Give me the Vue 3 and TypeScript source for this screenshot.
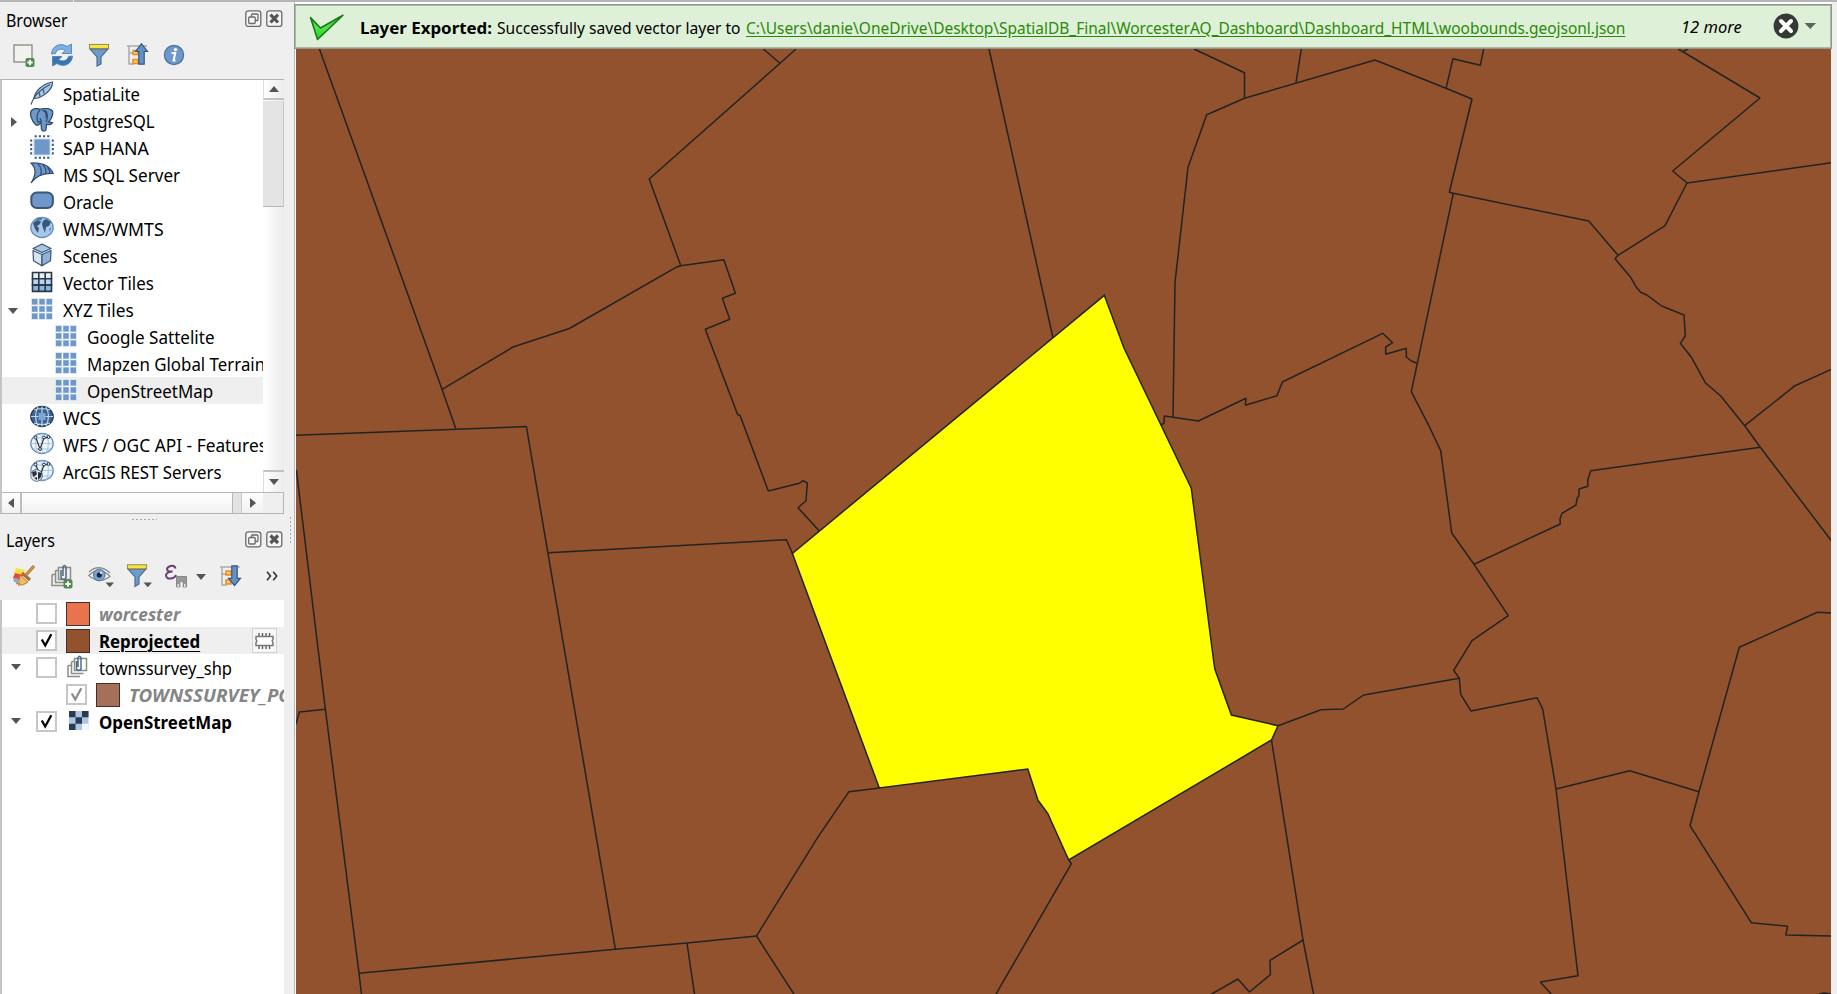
<script setup lang="ts">
import type { Directive } from 'vue'

interface BrowserItem {
  label: string
  icon: string
  width: number
  child?: boolean
  arrow?: 'right' | 'down'
  current?: boolean
}

interface LayerItem {
  label: string
  width: number
  checked: boolean
  kind: string
  color?: string
  child?: boolean
  arrow?: boolean
  current?: boolean
  memory?: boolean
}

const browserItems: BrowserItem[] = [
  { label: 'SpatiaLite', icon: 'feather', width: 77 },
  { label: 'PostgreSQL', icon: 'elephant', width: 92, arrow: 'right' },
  { label: 'SAP HANA', icon: 'hana', width: 86 },
  { label: 'MS SQL Server', icon: 'mssql', width: 117 },
  { label: 'Oracle', icon: 'oracle', width: 51 },
  { label: 'WMS/WMTS', icon: 'wms', width: 101 },
  { label: 'Scenes', icon: 'scenes', width: 55 },
  { label: 'Vector Tiles', icon: 'vtiles', width: 91 },
  { label: 'XYZ Tiles', icon: 'xyz', width: 71, arrow: 'down' },
  { label: 'Google Sattelite', icon: 'xyz', width: 128, child: true },
  { label: 'Mapzen Global Terrain', icon: 'xyz', width: 178, child: true },
  { label: 'OpenStreetMap', icon: 'xyz', width: 126, child: true, current: true },
  { label: 'WCS', icon: 'wcs', width: 38 },
  { label: 'WFS / OGC API - Features', icon: 'wfs', width: 204 },
  { label: 'ArcGIS REST Servers', icon: 'arcgis', width: 159 },
]

const layers: LayerItem[] = [
  { label: 'worcester', width: 81, checked: false, kind: 'off', color: '#e8734d' },
  { label: 'Reprojected', width: 101, checked: true, kind: 'active', color: '#91522d', current: true, memory: true },
  { label: 'townssurvey_shp', width: 133, checked: false, kind: 'group', arrow: true },
  { label: 'TOWNSSURVEY_POLYM', width: 199, checked: true, kind: 'off', color: '#a57059', child: true },
  { label: 'OpenStreetMap', width: 133, checked: true, kind: 'raster', arrow: true },
]

/* Condenses a label horizontally so that it takes the given advance width. */
const vFit: Directive<HTMLElement, number> = {
  mounted(el, binding) {
    el.style.transform = `scaleX(${binding.value / el.offsetWidth})`
  },
}

const selectedTown =
  '1104.3,295.3 1124,348 1191.3,488.3 1213.8,662 1214.9,669.3 1231.4,715 1278,725.7 1271.5,740 1068.7,860 1047.7,813.3 1038,800.3 1027.8,769 879.3,788 792.4,553.4'

const boundaries: string[] = [
  '319.4,49 442.1,389.4 455.7,428.6',
  '442.1,389.4 513,347 569.4,328.5 676,267.3 680.8,265.7 723.9,259.7 735.4,293.3 722.3,298.3 729.8,319.3 705.3,329.3 737.7,414.7 740,415.3 768.3,491 799.3,483.3 803,480.7 807.3,483 806,500.7 798,507.7 819.3,531',
  '763.4,49 780,63.3 796,49',
  '780,63.3 649.2,179 680.8,265.7',
  '989,49 1053,338',
  '1194,49 1244.5,72.7 1244.5,98.3',
  '1301.3,49 1296,82.7',
  '1173,417.3 1175,282.7 1188,167.3 1206.7,114.7 1244.5,98.3 1375,60 1446,88.3 1472,99 1449.3,192.3 1453.3,193.3 1588.7,221 1618,255.3 1615,258.7 1630.7,277.3 1636,286.7 1640.7,292.3 1646.3,294.7 1661.7,306 1684,315 1685.3,336 1680.3,343.3 1691,356.7 1705.3,382.7 1721,396.3 1744.7,425.7 1760.3,447.3 1832,541.5',
  '1161,424.3 1164,423.7 1164.3,416 1173,417.3 1198.3,421 1246,398.3 1245.3,405.3 1277,395.7 1282.3,382 1382.7,333.3 1392.7,342.7 1385.7,347 1385.7,354.3 1406.3,348.3 1406.3,357 1411.3,361 1416.7,363',
  '1446,88.3 1453,58.7 1480.3,65.3 1483.7,49',
  '1453.3,193.3 1411.3,391.7 1428.7,425.3 1440.7,450.7 1451.7,533 1474,564.3 1508.3,615.7 1472,640.7 1453.7,670.3 1459.3,678.3 1460.7,694.3 1471,711 1537,697.7 1542.7,709 1556,789 1578,975.7 1540.3,982 1552,995',
  '1474,564.3 1560.3,524 1560,519 1562,513.3 1576,505 1577.3,497.7 1579,496 1579,489 1588,486.3 1587.7,480.3 1590.7,470.7 1760.3,447.3',
  '1744.7,425.7 1795,385.7 1832,369',
  '1678.3,49 1760,98 1672.7,171 1687,183 1832,162.6',
  '1687,183 1665,225.7 1618,255.3',
  '1683.3,51.3 1688,49',
  '1832,613 1817.3,612.3 1739.3,647.3 1699,791.7 1690,825.7 1751.3,922.7 1787.7,926.3 1785.7,935 1832,936',
  '1556,789 1629.7,770.7 1699,791.7',
  '1278,725.7 1321,709.7 1343.3,709 1363.7,695 1459.3,678.3',
  '1271.5,740 1303,940 1313.7,995',
  '1303,940 1270,960.3 1270.4,974.7 1249.4,992 1237.9,979 1210,995',
  '1068.7,860 1071.4,863.7 995.5,995',
  '879.3,788 849,791.7 817.7,837.3 756.5,936 794.5,995',
  '295,435.2 526.4,426.6 615.4,949.3',
  '548.6,552.7 786.4,539.7 792.4,553.4',
  '296.4,470 325.4,709.3 359,973.2 361.5,995',
  '296,724 299.3,712 325.4,709.3',
  '359,973.2 615.4,949.3 687,943 756.5,936',
  '687,943 694.6,995',
  '1819,994 1824,993 1831,994',
]
</script>

<template>
  <div class="window">
    <div class="top-strip"><i></i><i></i></div>
    <div class="main">
      <aside class="docks">
        <section class="dock browser">
          <header class="dock-title">
            <span v-fit="62" class="fit">Browser</span>
            <svg class="dock-buttons" width="38" height="18" viewBox="0 0 38 18">
              <g fill="#f5f5f5" stroke="#6a6a6a" stroke-width="1.3">
                <rect x=".8" y=".8" width="15" height="15.6" rx="2.5" /><rect x="21.8" y=".8" width="15" height="15.6" rx="2.5" />
                <rect x="6.5" y="4" width="6.5" height="6.5" rx="1" /><rect x="3.7" y="7" width="6.5" height="6.5" rx="1" />
              </g>
              <path d="M25.5 4.7l7.5 7.8M33 4.7l-7.5 7.8" stroke="#555" stroke-width="3.2" />
            </svg>
          </header>
          <div class="toolbar">
            <svg width="24" height="24" viewBox="0 0 24 24">
              <rect x="2" y="2" width="18" height="17" fill="#f1f1ee" stroke="#8e8f88" stroke-width="1.4" />
              <rect x="13.5" y="15" width="9" height="9" rx="1.8" fill="#4f8b50" /><path d="M18 16.8v5.4M15.3 19.5h5.4" stroke="#fff" stroke-width="1.8" />
            </svg>
            <svg width="24" height="24" viewBox="0 0 24 24">
              <path d="M1.5 11C2 3 10-1 17 3.5L21.500 1v9.500h-9.500l3.300-3.200C11 4.800 6.500 6.500 5.500 10.500z" fill="#7fb1df" stroke="#4d85bd" stroke-width=".9" />
              <path d="M22.500 13C22 21 14 25 7 20.500L2.500 23v-9.500H12l-3.300 3.200C13 19.200 17.500 17.500 18.500 13.500z" fill="#3c74ae" stroke="#4d85bd" stroke-width=".9" />
            </svg>
            <svg width="24" height="24" viewBox="0 0 24 24">
              <path d="M3 6h18l-7 8v7l-4 2v-9z" fill="#6f9bcb" stroke="#44668d" stroke-width="1.100" /><rect x="2.400" y="1.400" width="19.200" height="4" fill="#f8e541" stroke="#8c8142" stroke-width=".9" />
            </svg>
            <svg width="24" height="24" viewBox="0 0 24 24">
              <path d="M2 3h20M4 3v18h5M4 10h5" fill="none" stroke="#aaa" stroke-width="1.500" /><path d="M8 7.500h5v4H8zM8 16.500h5v4H8z" fill="#ffc77a" stroke="#ee8c18" stroke-width="1.500" />
              <path d="M16.500.8l6 7.700h-3.300v12.700h-5.400V8.500h-3.300z" fill="#6592c4" stroke="#35577e" stroke-width="1.200" />
            </svg>
            <svg width="24" height="24" viewBox="0 0 24 24">
              <circle cx="12" cy="12" r="9.600" fill="#6d98c9" stroke="#44719f" stroke-width="1.200" />
              <circle cx="13.500" cy="6.600" r="1.700" fill="#fff" /><path d="M9.500 10h3.800l-1.800 7.500h2" fill="none" stroke="#fff" stroke-width="2" />
            </svg>
          </div>
          <div class="tree-frame">
            <div class="tree-row-area">
              <div class="tree">
                <div v-for="item in browserItems" :key="item.label" class="row" :class="{ current: item.current, child: item.child }">
                  <span class="expander"><i v-if="item.arrow" :class="item.arrow"></i></span>
                  <svg class="ic" width="24" height="24" viewBox="0 0 24 24">
                    <g v-if="item.icon === 'feather'">
                      <path d="M4 17.500C5 10 12 3 22.500 1C23 6 18 13 8 17z" fill="#a8c5e4" stroke="#3b5574" stroke-width="1.200" />
                      <path d="M1 23.500C3 16 9 9 20 3.500M9 11l1 4.500M13 7.500l1 5" fill="none" stroke="#3b5574" stroke-width="1.200" />
                    </g>
                    <g v-else-if="item.icon === 'elephant'" fill="#6d98c9" stroke="#314e70" stroke-width="1.300">
                      <path d="M6 17C1 13-.5 5 1.500 2.500C4-.2 8 .3 10 1.500C13-.2 20-.2 22.500 3c1 3.500-1.500 9-4 11l4 .8c-1 2-4 2-6 1.500l-.5 5c-.5 2.300-4 2.300-4.500 0L11 15l-3 2z" />
                      <path d="M10 2c-3 3-4 8-2 12h3c1-1-1-3-1-4M15 2c3 3 3 8 1 12M12.500 2.500c3 0 4 3 3.500 7" fill="none" />
                    </g>
                    <g v-else-if="item.icon === 'hana'">
                      <rect x="3.500" y="3.500" width="17" height="17" fill="#c5d7ea" /><rect x="4.500" y="4.500" width="15" height="15" fill="#6d98c9" />
                      <path d="M4.600 1.200h17M4.600 22.800h17M1.200 4.600v17M22.800 4.600v17" fill="none" stroke="#3d5c80" stroke-width="2" stroke-dasharray="2.200 2" />
                    </g>
                    <g v-else-if="item.icon === 'mssql'" stroke="#314e70" stroke-width="1.200">
                      <path d="M1 1C12 .5 20 4 23.200 11.500C14 11 6 14 1 21C7 12 6 6 1 1z" fill="#6d98c9" /><path d="M8 1.800q5 5 2.500 12M13 3q4 4 2.500 9.500M17.500 5.500q3 3 2 6" fill="none" />
                    </g>
                    <rect v-else-if="item.icon === 'oracle'" x="1.300" y="3.500" width="21.600" height="15.500" rx="5.500" fill="#6d98c9" stroke="#3b5574" stroke-width="2" />
                    <g v-else-if="item.icon === 'scenes'" stroke="#3b5574" stroke-width="1.200" stroke-linejoin="round">
                      <path d="M12 1l9 4.500-9 4-9-4z" fill="#abc5e0" /><path d="M3 7.500l9 4v11.300l-8.500-5z" fill="#d6e4f3" /><path d="M21 7.500l-9 4v11.300l8.500-5z" fill="#91b2d7" />
                    </g>
                    <g v-else-if="item.icon === 'vtiles'" stroke="#29374a" stroke-width="1.600">
                      <path d="M2.500 2.500h19v6.300h-19z" fill="#e8eef4" /><path d="M2.500 8.800h19v6.300h-19z" fill="#bad3ec" /><path d="M2.500 15.100h19v6.300h-19z" fill="#8eb2da" /><path d="M8.800 2v20M15.200 2v20" />
                    </g>
                    <g v-else-if="item.icon === 'xyz'">
                      <rect x="1.200" y="1.200" width="21.600" height="21.600" fill="#d3e0ef" /><path d="M8.600 1v22M15.400 1v22M1 8.600h22M1 15.400h22" stroke="#fff" stroke-width=".8" />
                      <path d="M2 2h5.400v5.400H2zM9.300 2h5.400v5.400H9.300zM16.600 2H22v5.400h-5.400zM2 9.300h5.400v5.400H2zM9.300 9.300h5.400v5.400H9.300zM16.600 9.300H22v5.400h-5.400zM2 16.600h5.400V22H2zM9.300 16.600h5.400V22H9.300zM16.600 16.600H22V22h-5.400z" fill="#6d98c9" />
                    </g>
                    <g v-else>
                      <ellipse cx="12" cy="11.500" rx="11.200" ry="10" :fill="item.icon === 'wcs' ? '#3d6490' : item.icon === 'wms' ? '#a9c8e9' : '#edf4fb'" :stroke="item.icon === 'wcs' ? '#263d59' : '#668fbd'" stroke-width="1.300" />
                      <g v-if="item.icon === 'wms'" fill="#38577c">
                        <path d="M3 7l4-3 4 1-1 3-3 2 2 2-1 5-3-4zM13 5l3-2 5 3-2 4-3 1-1 6-2-5-1-4z" /><path d="M7 2h5v2H7zM19 13l2-2-1 5z" fill="#537ba9" />
                      </g>
                      <g v-else-if="item.icon === 'wcs'">
                        <path d="M4 5q8-3 16 0M1 11.500h22M4 18q8 3 16 0M12 1.500v20M8 2q-5 9 0 19M16 2q5 9 0 19" fill="none" stroke="#c2d7ed" stroke-width="1.200" /><rect x="8.500" y="8" width="7" height="7" fill="#7ca6d6" />
                      </g>
                      <g v-else>
                        <path d="M3 6h18M1 11.500h22M3 17h18M12 1.500v20M8 2q-5 9 0 19M16 2q5 9 0 19" fill="none" stroke="#a9c6e5" stroke-width="1.100" />
                        <path d="M6 6l4 11 4-11 4-.5" fill="none" stroke="#30373e" stroke-width="1.200" /><g fill="#fff" stroke="#222a32"><circle cx="5.500" cy="5.500" r="1.400" /><circle cx="10" cy="17" r="1.400" /><circle cx="14" cy="5.500" r="1.400" /><circle cx="18.500" cy="5" r="1.400" /></g>
                        <g v-if="item.icon === 'arcgis'"><circle cx="6.500" cy="16.500" r="5.800" fill="#e3e8ed" stroke="#455260" stroke-width=".8" /><path d="M2 13l4-1 1 3-2 2-2 1zM8 13l4 1-1 4-3 3zM4 19l3-1v3z" fill="#25313d" /></g>
                      </g>
                    </g>
                  </svg>
                  <span v-fit="item.width" class="label fit">{{ item.label }}</span>
                </div>
              </div>
              <div class="vbar"><span class="vbtn"><i class="up"></i></span><span class="vthumb"></span><span class="vgap"></span><span class="vbtn end"><i class="down"></i></span></div>
            </div>
            <div class="hbar"><span class="hbtn"><i class="left"></i></span><span class="hthumb"></span><span class="hgap"></span><span class="hbtn end"><i class="right"></i></span><span class="corner"></span></div>
          </div>
        </section>
        <div class="h-splitter"><i></i></div>
        <section class="dock layers">
          <header class="dock-title">
            <span v-fit="49" class="fit">Layers</span>
            <svg class="dock-buttons" width="38" height="18" viewBox="0 0 38 18">
              <g fill="#f5f5f5" stroke="#6a6a6a" stroke-width="1.3">
                <rect x=".8" y=".8" width="15" height="15" rx="2.5" /><rect x="21.8" y=".8" width="15" height="15" rx="2.5" />
                <rect x="6.500" y="4" width="6.500" height="6.500" rx="1" /><rect x="3.700" y="6.500" width="6.500" height="6.500" rx="1" />
              </g>
              <path d="M25.500 4.500l7.500 7.500M33 4.500l-7.500 7.500" stroke="#555" stroke-width="3.200" />
            </svg>
          </header>
          <div class="toolbar">
            <svg width="24" height="24" viewBox="0 0 24 24">
              <path d="M4 4l9 2-2 5-9-2z" fill="#f7df3e" /><path d="M3 9l8 2-2 5-8-2z" fill="#e8473e" /><path d="M1 14l8 1-1 4-6-1z" fill="#84acd9" />
              <path d="M8 11l8 7q-4 4-10 3l2-2-4 1q4-3 4-9z" fill="#eeb962" stroke="#a97032" stroke-width=".8" /><path d="M10 9l8 7M14 11l8-9" stroke="#a87035" stroke-width="3.200" /><path d="M14 11l8-9" stroke="#d69a50" stroke-width="1.600" />
            </svg>
            <svg width="24" height="25" viewBox="0 0 24 25">
              <path d="M8.500 3.500h12v12h-12zM5.500 6.500v12h10M2 10.500v11h12M5.500 6.500h3M2 10.500h3" fill="none" stroke="#898f88" stroke-width="1.500" /><path d="M11 6v8q2.500 3 5 0V3q-1.500-3-3 0v9" fill="none" stroke="#4e6683" stroke-width="1.500" />
              <rect x="13.500" y="15.500" width="9" height="9" rx="2" fill="#4f8b50" /><path d="M18 17.300v5.400M15.300 20h5.400" stroke="#fff" stroke-width="1.800" />
            </svg>
            <svg width="26" height="24" viewBox="0 0 26 24">
              <path d="M.8 11.500Q11 1 22 12.500Q11 20.500.8 11.500zM1 8Q11-1 22 9" fill="#fafafa" stroke="#8d8d8d" stroke-width="1.300" /><circle cx="11.300" cy="11" r="5.800" fill="#7ba4d1" stroke="#4e7299" /><circle cx="11.300" cy="11" r="2.600" fill="#172535" /><circle cx="13" cy="9" r="1" fill="#fff" /><path d="M17.500 18.500h8.500l-4.200 4.800z" fill="#555" />
            </svg>
            <svg width="26" height="24" viewBox="0 0 26 24">
              <path d="M2 5h18l-7 8v7l-4 2.500V13z" fill="#6f9bcb" stroke="#44668d" stroke-width="1.100" /><rect x="1.400" y=".8" width="19.200" height="4" fill="#f8e541" stroke="#8c8142" stroke-width=".9" /><path d="M17.500 18.500h8.500l-4.200 4.800z" fill="#555" />
            </svg>
            <svg width="24" height="24" viewBox="0 0 24 24">
              <path d="M11.500 4.500Q10.500 1 6.500 2Q2 3.500 3.500 6.500Q5 8 8.500 7.500Q3 7.500 2 11Q2 15 7 14.500Q11 14 12 11" fill="none" stroke="#693f76" stroke-width="2" /><path d="M12.500 23v-10.500h10V23h-3.300v-5q-1.700-1.500-3.400 0v5z" fill="#999" stroke="#777" stroke-width=".8" /><path d="M13.500 20h1.500v3h-1.500zM20 20h1.500v3H20z" fill="#e5e5e5" />
            </svg>
            <i class="down menu-arrow"></i>
            <svg width="24" height="24" viewBox="0 0 24 24">
              <path d="M2 3h20M4 3v18h5M4 10h5" fill="none" stroke="#aaa" stroke-width="1.500" /><path d="M8 7h5v4H8zM8 16h5v4H8z" fill="#ffc77a" stroke="#ee8c18" stroke-width="1.500" /><path d="M13.800 1.800h5.400v12.500h3.300L16.500 21.500l-6-7.200h3.300z" fill="#6592c4" stroke="#35577e" stroke-width="1.200" />
            </svg>
            <svg class="more" width="12" height="10" viewBox="0 0 12 10"><path d="M1 .8L4.500 5 1 9.200M7.200.8L10.700 5 7.200 9.200" fill="none" stroke="#333" stroke-width="1.600" /></svg>
          </div>
          <div class="layer-tree">
            <div v-for="layer in layers" :key="layer.label" class="layer" :class="[layer.kind, { current: layer.current, child: layer.child }]">
              <span class="expander"><i v-if="layer.arrow" class="down"></i></span>
              <span class="check">
                <svg v-if="layer.checked" width="17" height="17" viewBox="0 0 17 17"><path d="M3.800 7.500l3.400 6L13.300 2.300" fill="none" :stroke="layer.child ? '#8b8b8b' : '#000'" stroke-width="2.300" /></svg>
              </span>
              <span v-if="layer.color" class="swatch" :style="{ backgroundColor: layer.color }"></span>
              <svg v-else-if="layer.kind === 'group'" class="layer-icon" width="24" height="24" viewBox="0 0 24 24">
                <path d="M8.500 3.500h12v12h-12zM5.500 6.500v12h12M2 10.500v11h12M5.500 6.500h3M2 10.500h3" fill="none" stroke="#898f88" stroke-width="1.500" /><path d="M10.500 6v8q2 3 4.500 0V2.500q-1.500-2.500-3 0V12" fill="none" stroke="#45658b" stroke-width="1.400" />
              </svg>
              <svg v-else class="layer-icon" width="24" height="24" viewBox="0 0 24 24">
                <path d="M3 2h19.500v19H3z" fill="#acc5e2" /><path d="M3 2h6.500v6.300H3zM16 2h6.500v6.300H16zM9.500 8.300H16v6.400H9.500zM3 14.700h6.500V21H3z" fill="#293b51" /><path d="M16 14.700h6.500V21H16z" fill="#f4f7fa" />
              </svg>
              <span v-fit="layer.width" class="label fit">{{ layer.label }}</span>
              <span v-if="layer.memory" class="memory">
                <svg width="19" height="18" viewBox="0 0 19 18"><path d="M4 1v3M7.500 1v3M11 1v3M14.500 1v3M4 14v3M7.500 14v3M11 14v3M14.500 14v3" stroke="#555" stroke-width="1.300" /><path d="M1 4.500h17v3q-1.500 1.500 0 3v3H1v-3q1.500-1.500 0-3z" fill="#fff" stroke="#777" stroke-width="1.500" /></svg>
              </span>
            </div>
          </div>
        </section>
      </aside>
      <div class="v-splitter"><i></i></div>
      <main class="canvas">
        <svg class="map" width="1535" height="988" viewBox="296 6 1535 988">
          <rect x="296" y="6" width="1535" height="988" fill="#91522d" />
          <polygon :points="selectedTown" fill="#ffff00" stroke="#232323" stroke-width="1.500" />
          <polyline v-for="(line, i) in boundaries" :key="i" :points="line" fill="none" stroke="#232323" stroke-width="1.500" stroke-linejoin="bevel" />
        </svg>
        <div class="message-bar">
          <svg class="success" width="36" height="28" viewBox="0 0 36 28">
            <defs><linearGradient id="tick" x1="0" y1="0" x2="0" y2="1"><stop offset="0" stop-color="#35b52d" /><stop offset=".5" stop-color="#53e74a" /><stop offset="1" stop-color="#16d31b" /></linearGradient></defs>
            <path d="M1.500 3.500L11.500 14 34 1.200 8.500 25.500z" fill="url(#tick)" stroke="#15761a" stroke-width="1.500" stroke-linejoin="round" />
          </svg>
          <div class="slot title"><b v-fit="132" class="fit">Layer Exported:</b></div>
          <div class="slot text"><span v-fit="244" class="fit">Successfully saved vector layer to</span></div>
          <div class="slot path"><a v-fit="879" class="fit">C:\Users\danie\OneDrive\Desktop\SpatialDB_Final\WorcesterAQ_Dashboard\Dashboard_HTML\woobounds.geojsonl.json</a></div>
          <div class="slot count"><em v-fit="61" class="fit">12 more</em></div>
          <svg class="close" width="44" height="26" viewBox="0 0 44 26">
            <circle cx="13" cy="13" r="12.400" fill="#363a36" /><path d="M8 8l10 10M18 8L8 18" stroke="#fff" stroke-width="4" stroke-linecap="round" /><path d="M31.500 10h11.500l-5.700 6z" fill="#5d665c" />
          </svg>
        </div>
      </main>
    </div>
  </div>
</template>

<style>
html,
body {
  margin: 0;
  overflow: hidden;
  background: #efefef;
}
</style>

<style scoped>
* {
  box-sizing: border-box;
}
.window {
  width: 1837px;
  height: 994px;
  display: flex;
  flex-direction: column;
  background: #efefef;
  font: 18px/27px 'Noto Sans', 'Open Sans', sans-serif;
  color: #000;
}
.top-strip {
  height: 2px;
  display: flex;
  gap: 1px;
}
.top-strip i {
  flex: 1;
  background: #b5b5b5;
}
.top-strip i:first-child {
  flex: 0 0 73px;
}
.main {
  flex: 1;
  display: flex;
  min-height: 0;
}
.docks {
  width: 284px;
  display: flex;
  flex-direction: column;
}
.fit {
  display: inline-block;
  flex: none;
  white-space: pre;
  transform-origin: left center;
}
.dock-title {
  height: 34px;
  padding: 8px 1px 0 6px;
  display: flex;
  justify-content: space-between;
  line-height: 20px;
}
.toolbar {
  height: 43px;
  padding: 7px 0 0 12px;
  display: flex;
  gap: 13.6px;
}
.tree-frame {
  height: 435px;
  border: 1px solid #b3b3b3;
  border-left-width: 2px;
  border-left-color: #c4c4c4;
  border-right: 0;
  background: #fff;
}
.tree-row-area {
  height: 412px;
  display: flex;
}
.tree {
  width: 261px;
  overflow: hidden;
}
.row {
  height: 27px;
  display: flex;
  padding-top: 1px;
  overflow: hidden;
}
.row .label {
  line-height: 26px;
}
.current {
  background: #efefef;
}
.expander {
  width: 28px;
  height: 27px;
  flex: none;
  display: flex;
  align-items: center;
  padding-left: 6px;
}
.child .expander {
  width: 52px;
}
.ic {
  flex: none;
  margin-right: 9px;
}
i.up,
i.down,
i.left,
i.right {
  width: 0;
  height: 0;
  border: 5.5px solid transparent;
}
i.up {
  border-width: 0 5.5px 6px;
  border-bottom-color: #555;
}
i.down {
  border-width: 6px 5.5px 0;
  border-top-color: #555;
}
i.left {
  border-width: 5.5px 6px 5.5px 0;
  border-right-color: #555;
}
i.right {
  border-width: 5.5px 0 5.5px 6px;
  border-left-color: #555;
}
.row .expander i.right {
  margin-left: 3px;
}
.vbar {
  flex: 1;
  display: flex;
  flex-direction: column;
  background: linear-gradient(90deg, #fff, #ececec);
}
.vbtn {
  height: 20px;
  border-bottom: 2px solid #c2c2c2;
  border-left: 1px solid #ddd;
  display: flex;
  align-items: center;
  justify-content: center;
}
.vbtn.end {
  height: 22px;
  border-bottom: 0;
  border-top: 2px solid #c2c2c2;
}
.vthumb {
  height: 106px;
  margin-top: 1px;
  background: #e4e4e4;
  border-bottom: 1px solid #b7b7b7;
  border-right: 1px solid #c6c6c6;
}
.vgap {
  flex: 1;
}
.hbar {
  height: 21px;
  display: flex;
  border-top: 1px solid #b7b7b7;
  background: linear-gradient(#fff, #f1f1f1);
}
.hbtn {
  width: 20px;
  border-right: 2px solid #bdbdbd;
  display: flex;
  align-items: center;
  justify-content: center;
}
.hbtn.end {
  width: 21px;
  border: 0;
}
.hthumb {
  width: 211px;
  border-right: 1px solid #b7b7b7;
}
.hgap {
  width: 9px;
  background: #e3e3e3;
  border-right: 1px solid #c8c8c8;
}
.corner {
  flex: 1;
  background: #efefef;
  border-right: 1px solid #b7b7b7;
}
.h-splitter {
  height: 10px;
  display: flex;
  justify-content: center;
  padding: 5px 0 0 4px;
}
.h-splitter i {
  width: 25px;
  height: 1px;
  background: repeating-linear-gradient(90deg, #aaa 0 2px, transparent 2px 4px);
}
.layers .dock-title {
  padding-top: 7px;
  height: 34px;
}
.layers .dock-title .fit {
  margin-top: -1px;
}
.layers .toolbar {
  gap: 14px;
  height: 42px;
  padding-top: 6px;
}
.layers .toolbar svg {
  flex: none;
}
.layers .toolbar svg:nth-child(3),
.layers .toolbar svg:nth-child(4) {
  margin-right: -2px;
}
.toolbar .menu-arrow {
  flex: none;
  margin: 10px -2px 0 -6px;
}
.layers .toolbar .more {
  margin: 7px 0 0 10px;
}
.layers {
  flex: 1;
  display: flex;
  flex-direction: column;
}
.layer-tree {
  flex: 1;
  border-left: 2px solid #c4c4c4;
  background: #fff;
  overflow: hidden;
}
.layer {
  height: 27px;
  display: flex;
  position: relative;
  padding-top: 1px;
  overflow: hidden;
}
.layer .expander {
  width: 34px;
  padding: 0 0 4px 9px;
}
.layer.child .expander {
  width: 64px;
}
.check {
  flex: none;
  width: 21px;
  height: 21px;
  margin-top: 2px;
  border: 2px solid #c6c6c6;
  background: #fff;
  line-height: 0;
}
.swatch,
.layer-icon {
  flex: none;
  width: 24px;
  height: 24px;
  margin: 1px 9px 0;
}
.layer-icon {
  margin-top: 0;
}
.swatch {
  border: 1px solid #3f302a;
}
.off .label {
  color: #858585;
  font-weight: 700;
  font-style: italic;
}
.active .label,
.raster .label {
  font-weight: 700;
}
.active .label {
  text-decoration: underline;
  text-decoration-thickness: 1px;
  text-underline-offset: 3px;
}
.memory {
  position: absolute;
  left: 250px;
  top: 1px;
  width: 25px;
  height: 25px;
  border: 1px solid #d2d2d2;
  background: #f6f6f6;
  display: flex;
  align-items: center;
  justify-content: center;
}
.v-splitter {
  width: 10px;
  padding: 515px 0 0 6px;
}
.v-splitter i {
  display: block;
  width: 1px;
  height: 26px;
  background: repeating-linear-gradient(#aaa 0 2px, transparent 2px 4px);
}
.canvas {
  position: relative;
  width: 1537px;
  padding: 4px 0 0 1px;
  border-left: 1px solid #b7b7b7;
  background: #fff;
}
.map {
  display: block;
}
.message-bar {
  position: absolute;
  left: -1px;
  top: 2px;
  width: 1538px;
  height: 45px;
  display: flex;
  border: 1px solid #8d998b;
  box-shadow: inset 0 0 0 1px #aab8a7;
  background: #dff0d8;
  font-size: 16.5px;
  line-height: 20px;
}
.success {
  margin: 9px 14px 0 14px;
}
.slot {
  flex: none;
  padding-top: 13px;
}
.title {
  width: 137px;
  margin-left: 1px;
}
.text {
  width: 249px;
}
.path {
  width: 935px;
}
.path a {
  color: #2a8a08;
  text-decoration: underline;
  text-underline-offset: 2px;
}
.count {
  width: 92px;
  padding-top: 12px;
}
.close {
  margin-top: 8px;
}
</style>
